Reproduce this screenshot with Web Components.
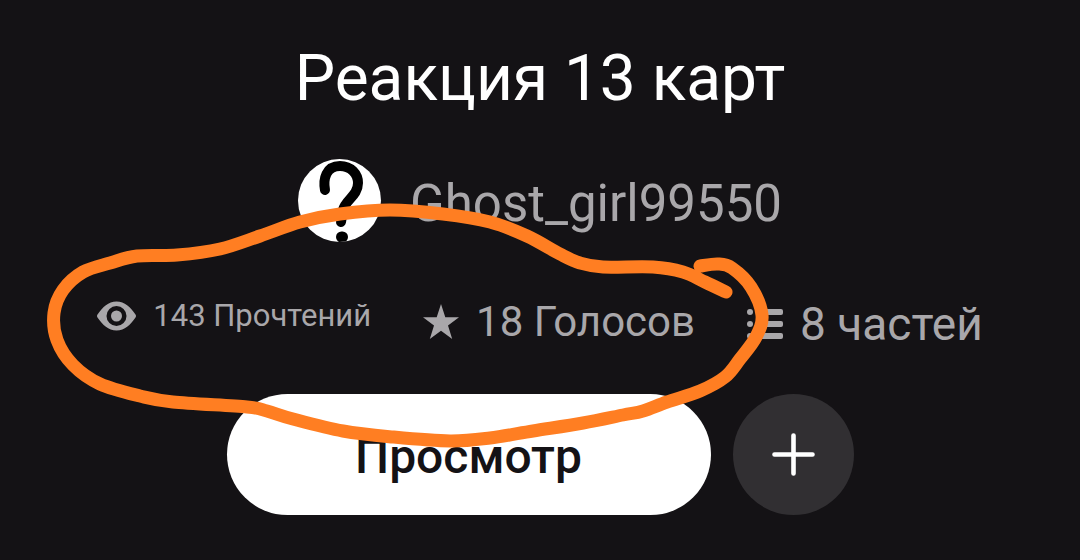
<!DOCTYPE html>
<html lang="ru">
<head>
<meta charset="utf-8">
<meta name="viewport" content="width=device-width, initial-scale=1">
<title>Реакция 13 карт</title>
<style>
  html { background: #141215; }
  body { margin: 0; font-family: Roboto, "Noto Sans", sans-serif; color: #fff; overflow-x: hidden; }
</style>
</head>
<body>
<story-page></story-page>
<script>
const define = (name, html, setup) => {
  const template = document.createElement('template');
  template.innerHTML = html;
  customElements.define(name, class extends HTMLElement {
    constructor() {
      super();
      this.attachShadow({ mode: 'open' }).append(template.content.cloneNode(true));
      if (setup) setup(this.shadowRoot);
    }
  });
};

define('story-title', `
  <style>
    :host { display: block; text-align: center; }
    h1 { margin: 0; font-size: 64px; line-height: 72px; font-weight: 400; }
  </style>
  <h1><slot></slot></h1>`);

define('author-link', `
  <style>
    :host { display: block; }
    a { display: flex; justify-content: center; align-items: flex-end; gap: 28px; color: #a9a7aa; text-decoration: none; }
    svg { width: 84px; height: 84px; flex: none; }
    span { font-size: 51px; line-height: 76px; }
  </style>
  <a href="#author">
    <svg viewBox="0 0 84 84" aria-hidden="true">
      <clipPath id="disc"><circle cx="41.500" cy="42.500" r="41.500"/></clipPath>
      <circle cx="41.500" cy="42.500" r="41.500" fill="#fff"/>
      <g clip-path="url(#disc)" fill="none" stroke="#000" stroke-width="10" stroke-linecap="round">
        <path d="M27 32C25 21 28 8 42 8C53 8 60 16 60 25C60 38 47 42 45 52L43 64"/>
        <path d="M43.500 79h1" stroke-width="11"/>
      </g>
    </svg>
    <span><slot></slot></span>
  </a>`);

define('story-stat', `
  <style>
    :host { display: flex; align-items: center; gap: 17px; color: #a9a7aa; white-space: nowrap;
            font-size: var(--stat-size, 42px); line-height: var(--stat-line, 52px); }
    ::slotted(svg) { flex: none; fill: currentColor; }
  </style>
  <slot name="icon"></slot><span><slot></slot></span>`);

define('read-button', `
  <style>
    :host { display: block; flex: 0 1 484px; }
    button { width: 100%; height: 121px; padding: 4px 0 0; border: 0; border-radius: 61px; background: #fff;
             color: #141215; font: 500 48px/56px Roboto, "Noto Sans", sans-serif; cursor: pointer; }
  </style>
  <button type="button"><slot></slot></button>`);

define('add-button', `
  <style>
    :host { display: block; flex: none; }
    button { display: grid; place-items: center; width: 121px; height: 121px; padding: 0; border: 0;
             border-radius: 50%; background: #312f32; color: #fff; cursor: pointer; }
    svg { width: 43px; height: 43px; }
  </style>
  <button type="button" aria-label="Добавить">
    <svg viewBox="0 0 43 43" fill="none" stroke="currentColor" stroke-width="4.6" stroke-linecap="round"><path d="M21.5 2.5v38M2.5 21.5h38"/></svg>
  </button>`);

/* Freehand marker line, smoothed through its sampled points. */
define('marker-stroke', `
  <style>
    :host { display: block; width: 1080px; height: 560px; pointer-events: none; }
    path { fill: none; stroke: #ff7e22; stroke-width: 13; stroke-linecap: round; stroke-linejoin: round; }
  </style>
  <svg width="1080" height="560" viewBox="0 0 1080 560" aria-hidden="true"><path/></svg>`,
  root => {
    const p = [[726,292],[705,282],[683,272],[653,267],[603,267],[580,263],[560,254],[527,236],[490,222],[443,214],
      [390,210],[340,214],[300,222],[260,236],[220,249],[177,255],[137,256],[110,263],[83,272],[63,290],[54,313],
      [57,340],[73,365],[100,384],[140,396],[173,402],[247,407],[267,411],[293,419],[343,431],[393,437],
      [450,441],[490,438],[533,431],[583,423],[623,415],[643,411],[667,402],[700,391],[725,377],[740,359],[756,337],
      [762,315],[751,287],[732,268],[718,264],[700,266]];
    let d = `M${p[0]}`;
    for (let i = 0; i < p.length - 1; i++) {
      const a = p[i - 1] || p[i], b = p[i], c = p[i + 1], e = p[i + 2] || c;
      d += `C${b[0] + (c[0] - a[0]) / 6} ${b[1] + (c[1] - a[1]) / 6} ${c[0] - (e[0] - b[0]) / 6} ${c[1] - (e[1] - b[1]) / 6} ${c}`;
    }
    root.querySelector('path').setAttribute('d', d);
  });

define('story-page', `
  <style>
    :host { display: block; position: relative; }
    main { display: flex; flex-direction: column; padding: 43px 24px 45px; }
    author-link { margin-top: 43px; }
    .stats { display: flex; justify-content: center; align-items: flex-start; gap: 52px; margin-top: 54px; }
    .reads { --stat-size: 31px; --stat-line: 40px; }
    .parts { --stat-size: 46px; --stat-line: 56px; }
    .actions { display: flex; justify-content: center; gap: 22px; margin-top: 42px; }
    marker-stroke { position: absolute; top: 0; left: 50%; transform: translateX(-50%); }
  </style>
  <main>
    <story-title>Реакция 13 карт</story-title>
    <author-link>Ghost_girl99550</author-link>
    <div class="stats">
      <story-stat class="reads">
        <svg slot="icon" width="39" height="30" viewBox="0 0 39 30" aria-hidden="true"><path fill-rule="evenodd" d="M19.500 .5C28 .5 33 6 38.500 13.500Q39.500 15 38.500 16.500C33 24 28 29.500 19.500 29.500S6 24 .5 16.500Q-.5 15 .5 13.500C6 6 11 .5 19.500 .5ZM19.500 5a10 10 0 1 0 0 20a10 10 0 1 0 0-20ZM19.500 9.500a5.500 5.500 0 1 1 0 11a5.500 5.500 0 1 1 0-11Z"/></svg>
        143 Прочтений
      </story-stat>
      <story-stat>
        <svg slot="icon" width="36" height="36" viewBox="0 0 36 36" aria-hidden="true"><path d="M18 0L22.300 13.200H36L25 21.500L29.200 35L18 26.800L6.800 35L11 21.500L0 13.200H13.700Z"/></svg>
        18 Голосов
      </story-stat>
      <story-stat class="parts">
        <svg slot="icon" width="36" height="30" viewBox="0 0 36 30" aria-hidden="true"><circle cx="3" cy="3" r="3"/><circle cx="3" cy="15" r="3"/><circle cx="3" cy="27" r="3"/><rect x="10" width="26" height="6" rx="2"/><rect x="10" y="12" width="26" height="6" rx="2"/><rect x="10" y="24" width="26" height="6" rx="2"/></svg>
        8 частей
      </story-stat>
    </div>
    <div class="actions">
      <read-button>Просмотр</read-button>
      <add-button></add-button>
    </div>
  </main>
  <marker-stroke></marker-stroke>`);
</script>
</body>
</html>
